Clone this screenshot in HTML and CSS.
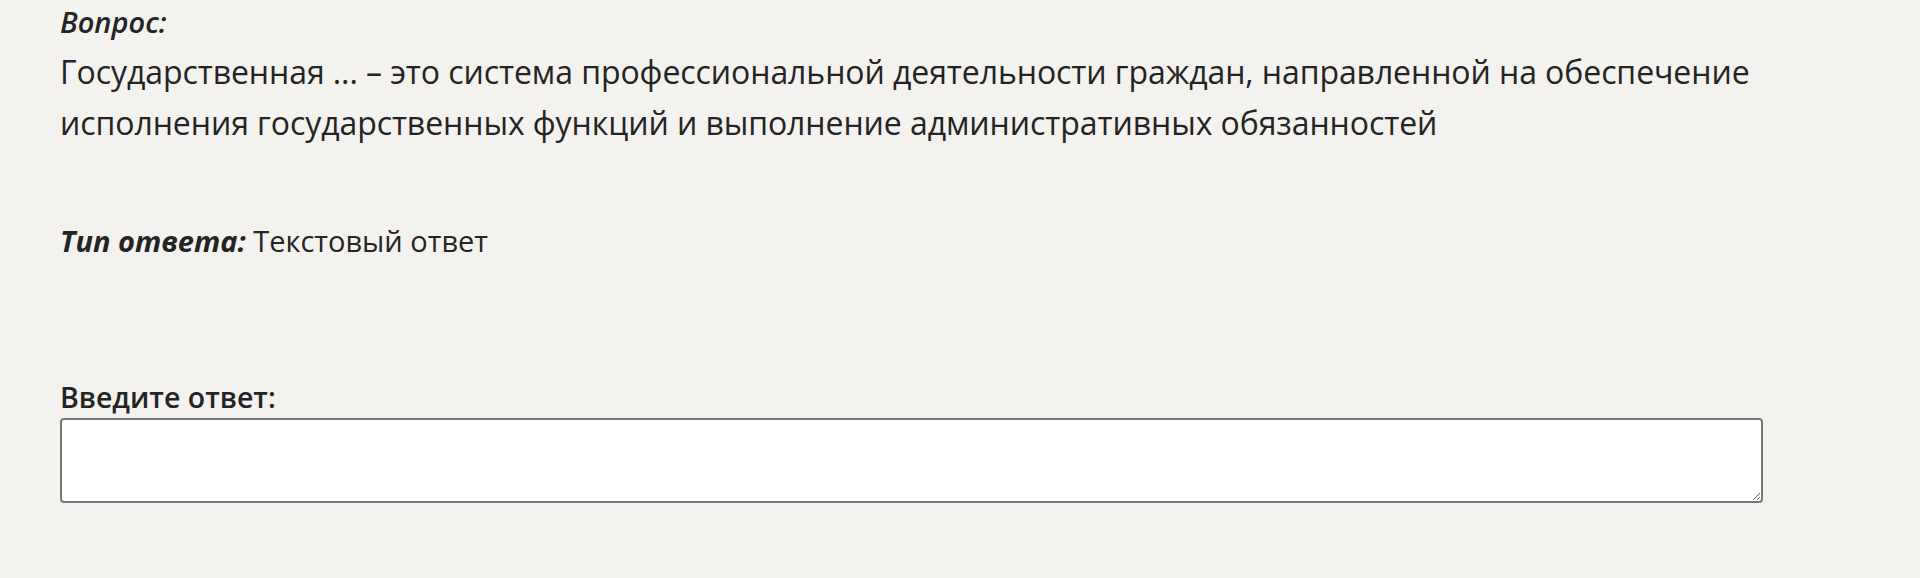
FILE: index.html
```html
<!DOCTYPE html>
<html>
    <head>
        <title>Вопрос</title>
        <meta charset="UTF-8">
        <meta name="viewport" content="width=device-width, initial-scale=1.0">
        <link rel="stylesheet" href="styles.css">
    </head>
    <body>
        <div class="question">
            <div class="caption">Вопрос:</div>
            <div class="text">Государственная ... – это система профессиональной деятельности граждан, направленной на обеспечение исполнения государственных функций и выполнение административных обязанностей</div>
            <div class="answer-type"><span class="caption-strong">Тип ответа:</span> Текстовый ответ</div>
            <label class="answer-label" for="answer">Введите ответ:</label>
            <textarea class="answer" id="answer"></textarea>
        </div>
    </body>
</html>
```

FILE: styles.css
```css
body{
    background-color: #f3f2ee;
    color: #242424;
    margin: 0px;
    font-family: "Open Sans", "Noto Sans", sans-serif;
}
.question{
    width: 1703px;
    padding-left: 60px;
}
.caption{
    font-size: 29px;
    font-weight: 600;
    font-style: italic;
    line-height: 34px;
    padding-top: 5px;
}
.text{
    font-size: 32px;
    line-height: 51px;
    letter-spacing: -0.08px;
    margin-top: 7px;
}
.answer-type{
    font-size: 29px;
    line-height: 51px;
    margin-top: 67px;
}
.caption-strong{
    font-weight: 700;
    font-style: italic;
}
.answer-label{
    display: block;
    font-size: 28.5px;
    font-weight: 600;
    line-height: 36px;
    margin-top: 113px;
}
.answer{
    display: block;
    box-sizing: border-box;
    width: 1703px;
    height: 85px;
    margin-top: 3px;
    border: 2px solid #777777;
    border-radius: 4px;
    background: #ffffff;
}
```
